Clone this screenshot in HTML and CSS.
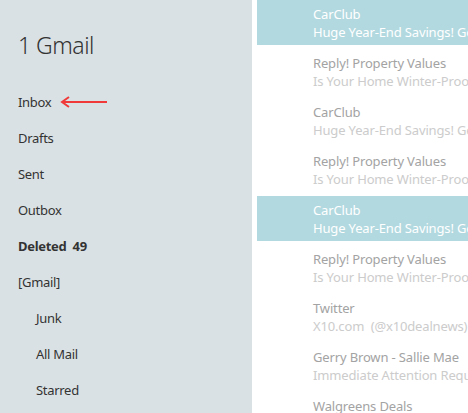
FILE: index.html
```html
<!DOCTYPE html>
<html lang="en">

<head>
    <meta charset="UTF-8">
    <meta name="viewport" content="width=device-width, initial-scale=1.0">
    <title>Mail</title>
    <link rel="stylesheet" href="styles.css">
</head>

<body>
    <div id="container">
        <div id="folders">
            <h1 class="account">1 Gmail</h1>
            <ul class="folder-list">
                <li class="folder">Inbox
                    <svg class="arrow" width="50" height="12" viewBox="0 0 50 12">
                        <line x1="4" y1="6" x2="48" y2="6" stroke="#f03a3a" stroke-width="2" />
                        <path d="M10 1 L3 6 L10 11" fill="none" stroke="#f03a3a" stroke-width="2" />
                    </svg>
                </li>
                <li class="folder">Drafts</li>
                <li class="folder">Sent</li>
                <li class="folder">Outbox</li>
                <li class="folder bold">Deleted&nbsp; 49</li>
                <li class="folder">[Gmail]</li>
                <li class="folder sub">Junk</li>
                <li class="folder sub">All Mail</li>
                <li class="folder sub">Starred</li>
            </ul>
        </div>
        <div id="messages">
            <div class="message selected">
                <div class="sender">CarClub</div>
                <div class="subject">Huge Year-End Savings! Get a great deal</div>
            </div>
            <div class="message">
                <div class="sender">Reply! Property Values</div>
                <div class="subject">Is Your Home Winter-Proofed?</div>
            </div>
            <div class="message">
                <div class="sender">CarClub</div>
                <div class="subject">Huge Year-End Savings! Get a great deal</div>
            </div>
            <div class="message">
                <div class="sender">Reply! Property Values</div>
                <div class="subject">Is Your Home Winter-Proofed?</div>
            </div>
            <div class="message selected">
                <div class="sender">CarClub</div>
                <div class="subject">Huge Year-End Savings! Get a great deal</div>
            </div>
            <div class="message">
                <div class="sender">Reply! Property Values</div>
                <div class="subject">Is Your Home Winter-Proofed?</div>
            </div>
            <div class="message">
                <div class="sender">Twitter</div>
                <div class="subject">X10.com&nbsp; (@x10dealnews) is now following you</div>
            </div>
            <div class="message">
                <div class="sender">Gerry Brown - Sallie Mae</div>
                <div class="subject">Immediate Attention Required</div>
            </div>
            <div class="message">
                <div class="sender">Walgreens Deals</div>
                <div class="subject">Save on holiday gifts</div>
            </div>
        </div>
    </div>
</body>

</html>
```

FILE: styles.css
```css
body {
    margin: 0;
    font-family: "Segoe UI", "Noto Sans", sans-serif;
    background-color: #fff;
    overflow: hidden;
}

#container {
    display: flex;
    height: 413px;
    overflow: hidden;
}

#folders {
    width: 234px;
    flex-shrink: 0;
    padding-left: 18px;
    background-color: #dae1e4;
    color: #333;
}

.account {
    margin: 28px 0 0 0;
    font-size: 23px;
    font-weight: 300;
    letter-spacing: -0.5px;
    line-height: 34px;
}

.folder-list {
    list-style: none;
    margin: 22px 0 0 0;
    padding: 0;
}

.folder {
    display: flex;
    align-items: center;
    height: 36px;
    font-size: 13px;
    letter-spacing: -0.3px;
}

.folder.bold {
    font-weight: bold;
}

.folder.sub {
    padding-left: 18px;
}

.arrow {
    margin-left: 8px;
}

#messages {
    flex: 1;
    padding-left: 5px;
    min-width: 0;
    overflow: hidden;
}

.message {
    height: 45px;
    margin-bottom: 4px;
    padding: 5px 0 0 56px;
    box-sizing: border-box;
    white-space: nowrap;
    overflow: hidden;
    font-size: 13px;
    letter-spacing: -0.15px;
    line-height: 18px;
}

.sender {
    color: #a3a3a3;
}

.subject {
    color: #cccccc;
}

.message.selected {
    background-color: #b2d9df;
}

.message.selected .sender,
.message.selected .subject {
    color: #fff;
}
```
